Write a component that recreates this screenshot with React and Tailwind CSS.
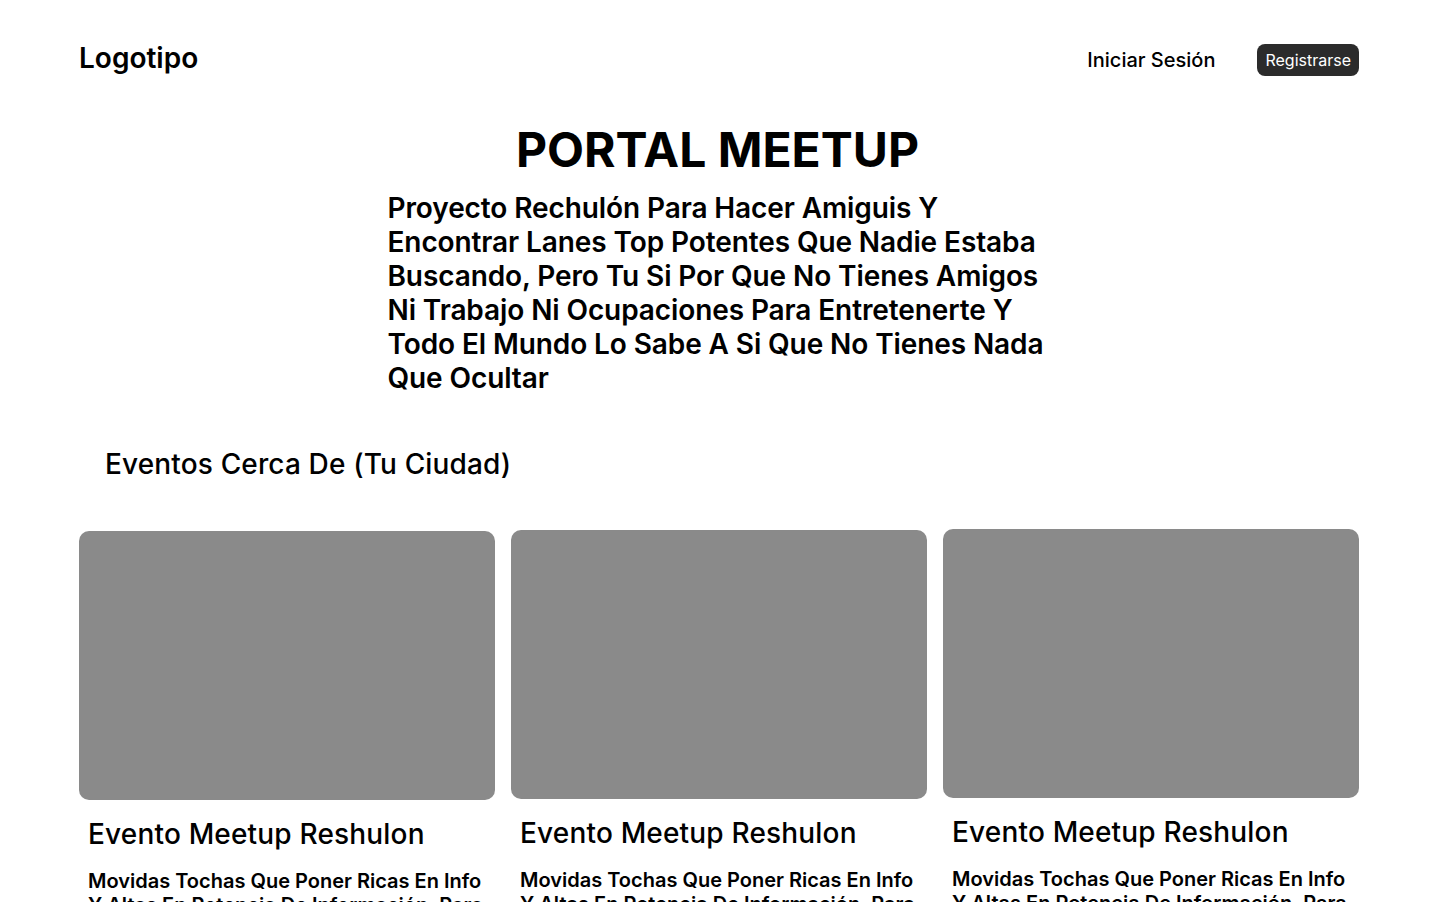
import React from 'react'

const font = { fontFamily: 'Inter, "Noto Sans", sans-serif' }

const events = [
  { id: 1, title: 'Evento Meetup Reshulon', offset: 'mt-[2px]' },
  { id: 2, title: 'Evento Meetup Reshulon', offset: 'mt-[1px]' },
  { id: 3, title: 'Evento Meetup Reshulon', offset: 'mt-0' },
]

const desc = 'Movidas Tochas Que Poner Ricas En Info Y Altas En Potencia De Información, Para Que La Peña Se Entere De Todo Lo Que Hay'

function EventCard({ ev }) {
  return (
    <div className={`flex flex-col ${ev.offset}`}>
      <div className="h-[269px] rounded-[10px] bg-[#8a8a8a]" />
      <div className="px-[9px] pt-[17px]">
        <h3 className="text-[28px] font-medium leading-[34px] tracking-[0.18px] text-black">{ev.title}</h3>
        <p className="mt-[18px] text-[20px] font-semibold leading-[24px] text-black">{desc}</p>
      </div>
    </div>
  )
}

export default function App() {
  return (
    <div className="min-h-screen bg-white text-black" style={font}>
      <header className="flex items-center justify-between pl-[79px] pr-[76px] pt-[44px]">
        <div className="text-[28px] font-semibold leading-[32px] -mt-[4px]">Logotipo</div>
        <nav className="flex items-center gap-[42px]">
          <a className="text-[20px] font-medium leading-[32px]">Iniciar Sesión</a>
          <button className="h-[32px] rounded-[8px] bg-[#2b2b2b] px-[8px] text-[16px] leading-[32px] text-white">Registrarse</button>
        </nav>
      </header>

      <section className="mt-[44px] flex flex-col items-center">
        <h1 className="text-[48px] font-bold leading-[60px]">PORTAL MEETUP</h1>
        <p className="mt-[11px] w-[660px] text-[28px] font-semibold leading-[34px] tracking-[-0.1px]">
          Proyecto Rechulón Para Hacer Amiguis Y Encontrar Lanes Top Potentes Que Nadie Estaba Buscando, Pero Tu Si Por Que No Tienes Amigos Ni Trabajo Ni Ocupaciones Para Entretenerte Y Todo El Mundo Lo Sabe A Si Que No Tienes Nada Que Ocultar
        </p>
      </section>

      <section className="pl-[79px] pr-[76px]">
        <h2 className="mt-[52px] pl-[26px] text-[28px] font-medium leading-[34px] tracking-[0.15px]">Eventos Cerca De (Tu Ciudad)</h2>
        <div className="mt-[48px] grid grid-cols-3 items-start gap-[16px]">
          {events.map(ev => <EventCard key={ev.id} ev={ev} />)}
        </div>
      </section>
    </div>
  )
}
